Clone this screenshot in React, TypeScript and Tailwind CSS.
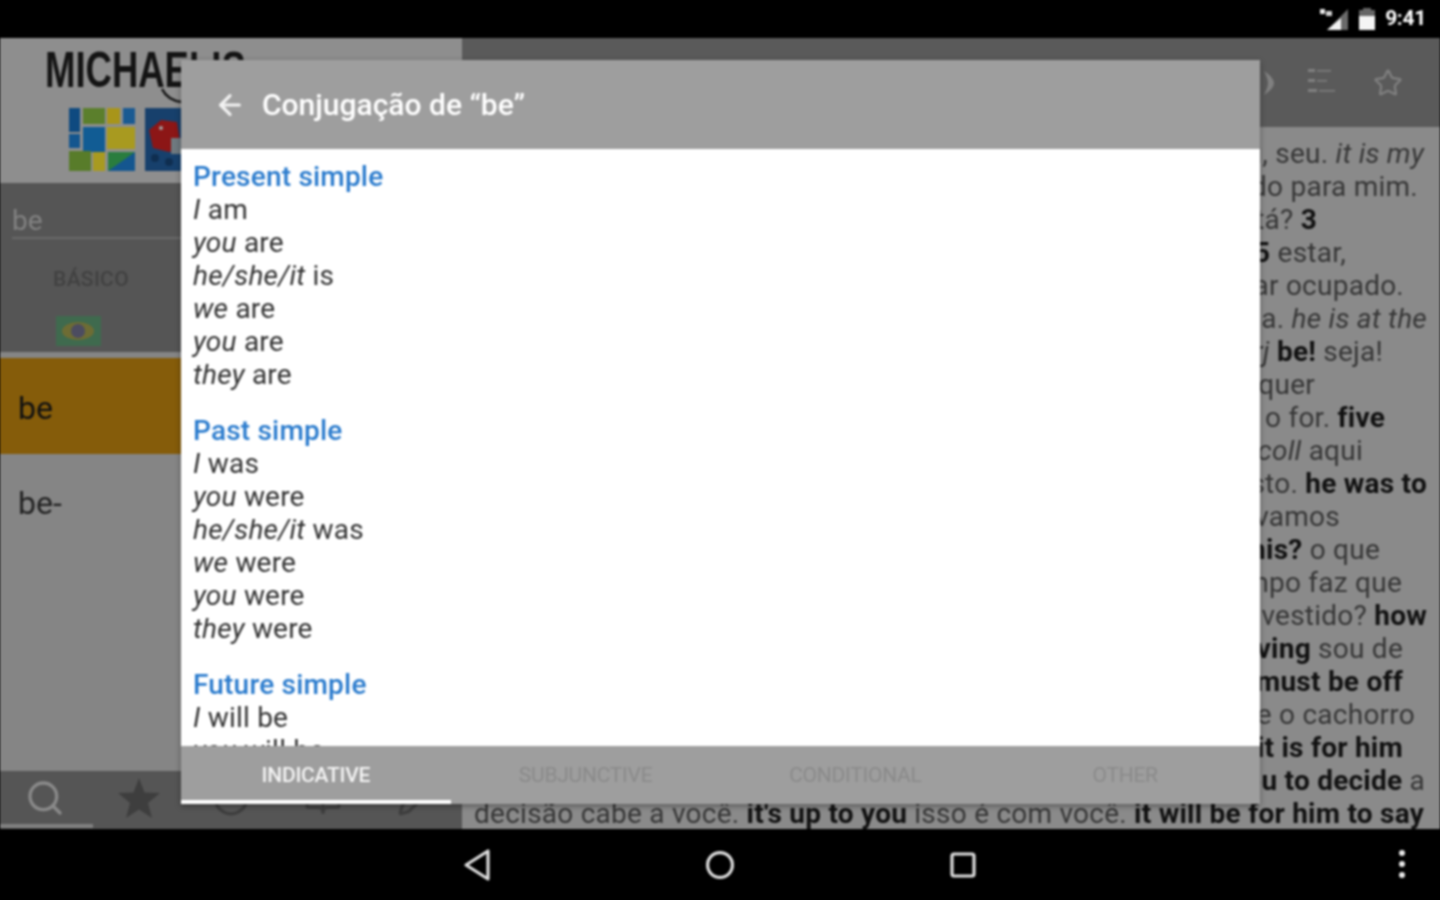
import { ArrowLeft, BookOpen, Circle, Pencil, Search, Star } from 'lucide-react'

type Seg = { t: string; b?: boolean; i?: boolean }

const FONT = "font-['Roboto',sans-serif]"

// entry text lines, right edge of each one set through its padding
const entryLines: { pad: string; segs: Seg[] }[] = [
  { pad: 'pr-[16px]', segs: [{ t: 'o meu, seu. ' }, { t: 'it is my', i: true }] },
  { pad: 'pr-[22px]', segs: [{ t: 'é muito importante do para mim.' }] },
  { pad: 'pr-[123px]', segs: [{ t: 'onde ele está? ' }, { t: '3', b: true }] },
  { pad: 'pr-[94px]', segs: [{ t: 'ser ', }, { t: '5', b: true }, { t: ' estar,' }] },
  { pad: 'pr-[36px]', segs: [{ t: 'I am busy estar ocupado.' }] },
  { pad: 'pr-[13px]', segs: [{ t: 'ele está em casa. ' }, { t: 'he is at the', i: true }] },
  { pad: 'pr-[57px]', segs: [{ t: 'imperativo ' }, { t: 'interj', i: true }, { t: ' be!', b: true }, { t: ' seja!' }] },
  { pad: 'pr-[125px]', segs: [{ t: 'seja o que quer' }] },
  { pad: 'pr-[55px]', segs: [{ t: 'como quer que seja o for. ' }, { t: 'five', b: true }] },
  { pad: 'pr-[77px]', segs: [{ t: 'be here ' }, { t: 'coll', i: true }, { t: ' aqui' }] },
  { pad: 'pr-[13px]', segs: [{ t: 'depende disto. ' }, { t: 'he was to', b: true }] },
  { pad: 'pr-[100px]', segs: [{ t: 'ele devia ir, vamos' }] },
  { pad: 'pr-[60px]', segs: [{ t: 'how much is this? ', b: true }, { t: 'o que' }] },
  { pad: 'pr-[38px]', segs: [{ t: 'quanto tempo faz que' }] },
  { pad: 'pr-[13px]', segs: [{ t: 'de que cor é o vestido? ' }, { t: 'how', b: true }] },
  { pad: 'pr-[37px]', segs: [{ t: 'I am from Brazil living', b: true }, { t: ' sou de' }] },
  { pad: 'pr-[37px]', segs: [{ t: 'the dog must be off', b: true }] },
  { pad: 'pr-[25px]', segs: [{ t: 'tem de ser que o cachorro' }] },
  { pad: 'pr-[37px]', segs: [{ t: 'it is for him', b: true }] },
  { pad: 'pr-[15px]', segs: [{ t: 'it is up to you to decide', b: true }, { t: ' a' }] },
  { pad: 'pr-[16px]', segs: [{ t: 'decisão cabe a você. ' }, { t: "it's up to you", b: true }, { t: ' isso é com você. ' }, { t: 'it will be for him to say', b: true }] },
]

const conjugations = [
  {
    title: 'Present simple',
    rows: [['I', 'am'], ['you', 'are'], ['he/she/it', 'is'], ['we', 'are'], ['you', 'are'], ['they', 'are']],
  },
  {
    title: 'Past simple',
    rows: [['I', 'was'], ['you', 'were'], ['he/she/it', 'was'], ['we', 'were'], ['you', 'were'], ['they', 'were']],
  },
  {
    title: 'Future simple',
    rows: [['I', 'will be'], ['you', 'will be'], ['he/she/it', 'will be']],
  },
]

function Mosaics() {
  return (
    <svg width="112" height="64" viewBox="0 0 112 64">
      <rect x="0" y="0" width="66" height="63" fill="#8e8e8e" />
      <rect x="0" y="0" width="11" height="24" fill="#0f4a80" />
      <rect x="14" y="0" width="22" height="16" fill="#5b7f2c" />
      <rect x="38" y="0" width="13" height="16" fill="#a8951a" />
      <rect x="54" y="0" width="12" height="16" fill="#1a5a92" />
      <rect x="0" y="26" width="11" height="14" fill="#14568f" />
      <rect x="14" y="19" width="22" height="25" fill="#115c94" />
      <rect x="38" y="19" width="28" height="22" fill="#a89a20" />
      <rect x="0" y="43" width="22" height="20" fill="#587c2a" />
      <rect x="24" y="44" width="12" height="19" fill="#a89a20" />
      <rect x="39" y="44" width="27" height="19" fill="#2a7d3e" />
      <polygon points="39,63 66,44 66,63" fill="#14568f" />
      <rect x="76" y="0" width="36" height="63" fill="#17406c" />
      <polygon points="80,22 92,12 108,14 112,40 100,44 84,40" fill="#8c1616" />
      <rect x="102" y="30" width="10" height="16" fill="#6f7a80" />
      <circle cx="92" cy="20" r="2" fill="#a0a0a0" />
      <circle cx="86" cy="50" r="4" fill="#0f2e50" />
      <circle cx="100" cy="54" r="4" fill="#0f2e50" />
    </svg>
  )
}

function ListLinesIcon() {
  return (
    <svg width="30" height="30" viewBox="0 0 30 30" fill="#808080">
      <rect x="1" y="1" width="7" height="3" />
      <rect x="10" y="2" width="14" height="1.5" />
      <rect x="1" y="11" width="7" height="3" />
      <rect x="10" y="12" width="10" height="1.5" />
      <rect x="1" y="21" width="9" height="3" />
      <rect x="12" y="22" width="16" height="1.5" />
    </svg>
  )
}

function Line({ segs }: { segs: Seg[] }) {
  return (
    <>
      {segs.map((s, i) => (
        <span key={i} className={(s.b ? 'font-bold text-[#111111] ' : '') + (s.i ? 'italic' : '')}>
          {s.t}
        </span>
      ))}
    </>
  )
}

function ConjugationDialog() {
  return (
    <div className="absolute left-[181px] top-[60px] w-[1079px] h-[744px] flex flex-col bg-white shadow-[0_2px_6px_rgba(0,0,0,0.35)]">
      <div className="h-[89px] shrink-0 bg-[#9e9e9e] flex items-center pl-[33px] gap-[16px] text-white">
        <ArrowLeft size={32} strokeWidth={2.4} className="text-[#f2f2f2]" />
        <span className="text-[30px] font-medium">Conjugação de “be”</span>
      </div>
      <div className="flex-1 overflow-hidden pl-[12px] pt-[11px] flex flex-col gap-[23px] text-[28px] tracking-[0.2px] leading-[33px] text-[#333333]">
        {conjugations.map(c => (
          <div key={c.title}>
            <div className="font-medium text-[#2a7bcd]">{c.title}</div>
            {c.rows.map((r, i) => (
              <div key={i}>
                <span className="italic">{r[0]}</span> {r[1]}
              </div>
            ))}
          </div>
        ))}
      </div>
      <div className="h-[58px] shrink-0 bg-[#9e9e9e] flex text-[21px] tracking-[-0.25px]">
        <div className="flex-1 flex items-center justify-center pt-[6px] text-[#f4f4f4] font-medium border-b-[4px] border-white">INDICATIVE</div>
        <div className="flex-1 flex items-center justify-center pt-[2px] text-[#8a8a8a]">SUBJUNCTIVE</div>
        <div className="flex-1 flex items-center justify-center pt-[2px] text-[#8a8a8a]">CONDITIONAL</div>
        <div className="flex-1 flex items-center justify-center pt-[2px] text-[#8a8a8a]">OTHER</div>
      </div>
    </div>
  )
}

export default function App() {
  return (
    <div className="w-[1440px] h-[900px] overflow-hidden bg-black">
      <div className={`relative w-[1440px] h-[900px] overflow-hidden flex flex-col bg-black blur-[0.8px] ${FONT}`}>
        {/* Status bar */}
        <div className="h-[38px] shrink-0 bg-black flex items-center justify-end pr-[14px] text-white">
          <svg width="30" height="26" viewBox="0 0 30 26" className="mr-[10px]">
            <polygon points="29,3 29,24 8,24" fill="#6a6a6a" />
            <polygon points="22,12 22,24 8,24" fill="#f2f2f2" />
            <rect x="1" y="3" width="5" height="5" fill="#e8e8e8" />
            <rect x="7" y="5" width="6" height="5" fill="#d0d0d0" />
          </svg>
          <svg width="16" height="24" viewBox="0 0 16 24" className="mr-[10px]">
            <rect x="4" y="1" width="8" height="3" fill="#666" />
            <rect x="0" y="3" width="16" height="6" fill="#666" />
            <rect x="0" y="9" width="16" height="14" fill="#f4f4f4" />
          </svg>
          <span className="text-[21px] font-bold tracking-[-0.3px]">9:41</span>
        </div>

        {/* App behind the scrim */}
        <div className="flex-1 flex min-h-0">
          <div className="w-[462px] shrink-0 flex flex-col bg-[#858585]">
            <div className="relative h-[145px] shrink-0 bg-[#8e8e8e] pl-[45px] pt-[8px] overflow-hidden">
              <div className="h-[48px] font-['Liberation_Sans',sans-serif] font-bold text-[50px] leading-[48px] text-[#141414] origin-left scale-x-[0.73] whitespace-nowrap">
                MICHAELIS
              </div>
              <svg width="24" height="16" viewBox="0 0 24 16" fill="none" stroke="#141414" strokeWidth="2.5" className="absolute left-[160px] top-[50px]">
                <path d="M2 1 C6 9 12 13 22 14" />
              </svg>
              <div className="pl-[24px] pt-[14px]">
                <Mosaics />
              </div>
            </div>
            <div className="h-[175px] shrink-0 bg-[#555555] flex flex-col">
              <div className="mx-[12px] mt-[20px] h-[36px] border-b-[2px] border-[#6a6a6a] text-[28px] leading-[36px] text-[#828282]">be</div>
              <div className="w-[182px] flex flex-col items-center mt-[26px]">
                <span className="text-[21px] font-medium tracking-[0.3px] text-[#414141] leading-[28px]">BÁSICO</span>
                <div className="mt-[23px] mr-[26px] w-[45px] h-[30px] bg-[#3f6a4e] flex items-center justify-center">
                  <div className="w-[32px] h-[18px] rounded-[50%] bg-[#6e6c34] flex items-center justify-center">
                    <div className="w-[14px] h-[14px] rounded-full bg-[#4c4c60]" />
                  </div>
                </div>
              </div>
              <div className="mt-auto h-[6px] bg-[#858585]" />
            </div>
            <div className="h-[96px] shrink-0 bg-[#855c0a] flex items-center pl-[18px] pt-[3px] text-[32px] text-[#111111]">be</div>
            <div className="h-[96px] shrink-0 flex items-center pl-[18px] pt-[2px] text-[32px] text-[#222222]">be-</div>
            <div className="flex-1" />
            <div className="h-[58px] shrink-0 bg-[#555555] flex items-center pb-[4px] relative">
              <div className="w-[93px] flex justify-center pr-[2px]">
                <Search size={40} strokeWidth={2} className="text-[#8a8a8a]" />
              </div>
              <div className="w-[93px] flex justify-center">
                <svg width="44" height="42" viewBox="0 0 44 42" fill="#3e3e3e">
                  <polygon points="22,1 27.5,15.5 43,16 31,26 35,41 22,32.5 9,41 13,26 1,16 16.5,15.5" />
                </svg>
              </div>
              <div className="w-[93px] flex justify-center">
                <Circle size={38} strokeWidth={2} className="text-[#3e3e3e]" />
              </div>
              <div className="w-[93px] flex justify-center">
                <BookOpen size={38} strokeWidth={2} className="text-[#3e3e3e]" />
              </div>
              <div className="w-[93px] flex justify-center">
                <Pencil size={38} strokeWidth={2} className="text-[#3e3e3e]" />
              </div>
              <div className="absolute left-0 bottom-[1px] w-[93px] h-[4px] bg-[#808080]" />
            </div>
          </div>

          <div className="flex-1 flex flex-col min-w-0 bg-[#8a8a8a]">
            <div className="h-[89px] shrink-0 bg-[#5a5a5a] flex items-center justify-end pr-[37px] gap-[36px]">
              <svg width="16" height="26" viewBox="0 0 16 26" fill="#808080" className="mr-[-5px]">
                <path d="M4 1 C10 5 14 9 14 13 C14 17 10 21 4 25 C7 19 8 16 8 13 C8 10 7 7 4 1 Z" />
              </svg>
              <ListLinesIcon />
              <Star size={30} strokeWidth={1.8} className="text-[#808080]" />
            </div>
            <div className="flex-1 overflow-hidden pt-[10px] text-[28px] tracking-[0.24px] leading-[33px] text-[#363636] whitespace-nowrap">
              {entryLines.map((l, i) => (
                <div key={i} className={`flex justify-end ${l.pad}`}>
                  <span>
                    <Line segs={l.segs} />
                  </span>
                </div>
              ))}
            </div>
          </div>
        </div>

        {/* Navigation bar */}
        <div className="h-[71px] shrink-0 bg-black relative flex items-center justify-center gap-[214px]">
          <svg width="28" height="34" viewBox="0 0 28 34" fill="none" stroke="#dedede" strokeWidth="3.2">
            <polygon points="25,3 25,31 3,17" strokeLinejoin="round" />
          </svg>
          <svg width="30" height="30" viewBox="0 0 30 30" fill="none" stroke="#dedede" strokeWidth="3.2">
            <circle cx="15" cy="15" r="12.4" />
          </svg>
          <svg width="28" height="28" viewBox="0 0 28 28" fill="none" stroke="#dedede" strokeWidth="3.2">
            <rect x="3" y="3" width="22" height="22" rx="2" />
          </svg>
          <div className="absolute right-[35px] top-[21px] flex flex-col gap-[5px]">
            <div className="w-[6px] h-[6px] rounded-full bg-[#e8e8e8]" />
            <div className="w-[6px] h-[6px] rounded-full bg-[#e8e8e8]" />
            <div className="w-[6px] h-[6px] rounded-full bg-[#e8e8e8]" />
          </div>
        </div>

        <ConjugationDialog />
      </div>
    </div>
  )
}
